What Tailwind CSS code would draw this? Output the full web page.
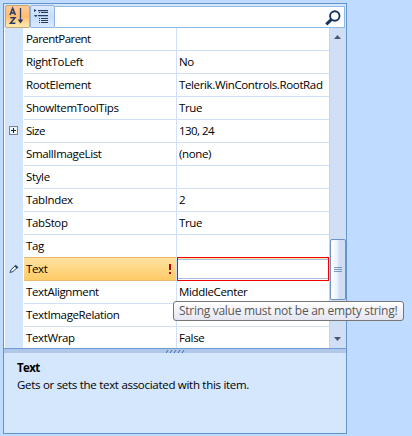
<!DOCTYPE html>
<html lang="en">
<head>
<meta charset="utf-8">
<title>Property grid</title>
<script src="https://cdn.jsdelivr.net/npm/@tailwindcss/browser@4"></script>
</head>
<body class="w-[412px] h-[436px] overflow-hidden bg-[#bfdbff] font-['Open_Sans','Noto_Sans',sans-serif] text-[11.5px] leading-[22px] tracking-[-0.36px] text-black">
<main class="relative ml-[3px] pt-[3px] w-[344px]">
  <section class="flex flex-col w-[344px] h-[431px] border border-[#6593cf] bg-[#d5e7fd]">
    <header class="flex h-[24px] pt-px pl-px">
      <div class="w-[25px] h-[23px] rounded-[2px] border border-[#c2a978] bg-linear-to-b from-[#fcc99a] via-[#ffbd70] to-[#fee9b0]">
        <svg width="23" height="21" viewBox="0 0 23 21" fill="none" stroke="#263c66" stroke-width="1.5"><path d="M4 9L6.7 2.3L9.4 9M5 7H8.5M4.3 11.7H9L4.4 17.3H9.4"/><path d="M14.5 2V16" stroke-width="1.3"/><path d="M11.7 13.5H17.3L14.5 17.5Z" fill="#263c66" stroke="none"/></svg>
      </div>
      <div class="w-[25px] h-[23px] rounded-[2px] border border-[#8db2e3] bg-linear-to-b from-[#dceafb] via-[#c6dcf7] to-[#dcebfd]">
        <svg width="23" height="21" viewBox="0 0 23 21" fill="#263c66"><path d="M3 3L5.5 4.5L3 6ZM3 9H6.5L4.8 11.3ZM7 4H17V5.3H7ZM7 9H17V10.3H7Z"/><path d="M8 6.5H9M10 6.5H17M8 12.5H9M10 12.5H17M8 14.5H9M10 14.5H17M8 16.5H9M10 16.5H17" stroke="#263c66"/></svg>
      </div>
      <div class="mt-px w-[290px] h-[22px] bg-white border border-l-0 border-[#8db8ea] flex justify-end">
        <svg width="21" height="20" viewBox="0 0 21 20" fill="none" stroke="#19335f"><circle cx="11.8" cy="9" r="4.7" stroke-width="1.9"/><path d="M8.5 12.3L3.3 17.3" stroke-width="3"/></svg>
      </div>
    </header>
    <div class="flex h-[320px] bg-white">
      <div class="ml-px w-[18px] h-full bg-[#d3e5fc] flex flex-col items-start pl-[4px]">
        <svg class="mt-[98px]" width="9" height="9" fill="none" stroke="#7d828b"><rect x=".5" y=".5" width="8" height="8" fill="#eef4fc"/><path d="M2 4.5H7M4.5 2V7" stroke="#222"/></svg>
        <svg class="mt-[129px]" width="10" height="10" viewBox="0 0 10 10"><path d="M1 8.5L2 5.7L6 2L8 3.8L4 7.5Z" fill="#fff" stroke="#2b4567"/><path d="M6 1.5L8.7 4" stroke="#2b4567" stroke-width="2"/></svg>
      </div>
      <div id="rows" class="ml-px w-[305px] h-full overflow-hidden"></div>
      <div class="w-[17px] h-full border-l border-[#c1d5f0] bg-[#cfdff5] flex flex-col">
        <svg class="mt-[7px] ml-[4px] shrink-0" width="8" height="4" fill="#4c5773"><path d="M0 4H7L3.5 0Z"/></svg>
        <div class="mt-[200px] w-[16px] h-[61px] shrink-0 rounded-[2px] border border-[#6f91c3] bg-linear-to-r from-white from-[6%] via-[#eaf2fd] via-[45%] to-[#cfdef3] to-[60%] p-px flex justify-center items-center">
          <svg width="8" height="6" stroke="#7797c5"><path d="M0 .5H8M0 2.5H8M0 4.5H8"/></svg>
        </div>
        <svg class="mt-[37px] ml-[4px] shrink-0" width="8" height="4" fill="#4c5773"><path d="M0 0H7L3.5 4Z"/></svg>
      </div>
    </div>
    <div class="h-[5px] border-t border-[#6f9ad3] bg-[#b0c7e8] flex justify-center shrink-0">
      <svg class="mt-px" width="19" height="3"><path d="M0 3L2 0M4 3L6 0M8 3L10 0M12 3L14 0M16 3L18 0" stroke="#376fb8" stroke-width="1"/></svg>
    </div>
    <footer class="pl-[13px] pt-[6px] leading-[17px]">
      <h1 class="font-bold tracking-[-0.6px]">Text</h1>
      <p class="tracking-[-0.29px]">Gets or sets the text associated with this item.</p>
    </footer>
  </section>
  <div class="absolute left-[170px] top-[301px] w-[231px] h-[20px] rounded-[3px] border border-[#767676] bg-linear-to-b from-white to-[#e4e5f0] pl-[5px] text-[12px] leading-[18px] tracking-[-0.29px] text-[#575757] whitespace-nowrap">String value must not be an empty string!</div>
</main>
<script>
const rows = [
  ['ParentParent', ''], ['RightToLeft', 'No'], ['RootElement', 'Telerik.WinControls.RootRad'],
  ['ShowItemToolTips', 'True'], ['Size', '130, 24'], ['SmallImageList', '(none)'],
  ['Style', ''], ['TabIndex', '2'], ['TabStop', 'True'], ['Tag', ''],
  ['Text', ''], ['TextAlignment', 'MiddleCenter'], ['TextImageRelation', ''], ['TextWrap', 'False']
];
document.getElementById('rows').innerHTML = rows.map(([name, value], i) => {
  const selected = i === 10;
  const tight = i === 0 || i === 4 ? 'tracking-[-0.55px]' : '';
  const left = selected
    ? `<div class="-mt-px h-[24px] w-[152px] shrink-0 border-y border-[#e9b76c] bg-linear-to-b from-[#ffe2a0] to-[#ffcb66] pl-[2px] pr-[4px] flex justify-between whitespace-nowrap">${name}<svg class="mt-[6px]" width="4" height="10" fill="#c00000"><path d="M1 0H3V6H1ZM1 8H3V10H1Z"/></svg></div>`
    : `<div class="w-[152px] shrink-0 pl-[2px] whitespace-nowrap ${tight}">${name}</div>`;
  const right = selected
    ? `<div class="-mt-px h-[24px] w-[152px] border border-[#f00000] bg-white"><div class="h-[22px] border-t border-[#ffe1a0]"><div class="h-[20px] border-y border-[#a3bfe5]"></div></div></div>`
    : `<div class="w-[151px] pl-[2px] whitespace-nowrap overflow-hidden ${tight}">${value}</div>`;
  return `<div class="flex h-[23px] border-b border-[#d0e1f7]">${left}<div class="w-px h-[23px] shrink-0 bg-[#d0e1f7]"></div>${right}</div>`;
}).join('');
</script>
</body>
</html>
